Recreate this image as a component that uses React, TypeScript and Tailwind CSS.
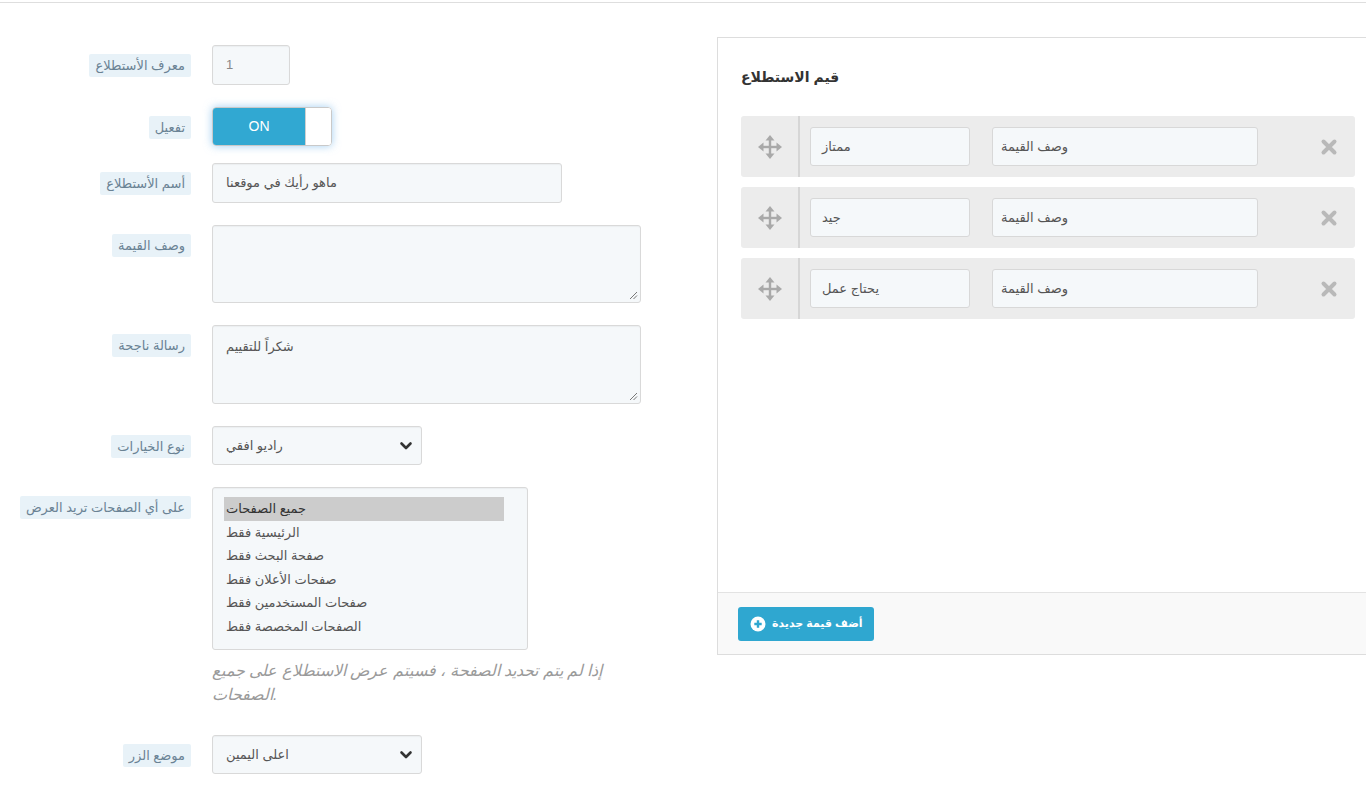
import React from "react";

const font = { fontFamily: '"Liberation Sans", "DejaVu Sans", sans-serif' };

function Label({ children }: { children: React.ReactNode }) {
  return (
    <div className="w-[191px] flex justify-end items-start pt-[9px] shrink-0">
      <span className="bg-[#e8f2f8] text-[#6a8294] text-[13px] leading-[23px] px-[6px] rounded-[2px] whitespace-nowrap">
        {children}
      </span>
    </div>
  );
}

function Chevron() {
  return (
    <svg width="14" height="14" viewBox="0 0 14 14" className="shrink-0">
      <path d="M2.5 4.5 L7 9 L11.5 4.5" fill="none" stroke="#333" strokeWidth="2.6" strokeLinecap="round" strokeLinejoin="round" />
    </svg>
  );
}

function MoveIcon() {
  return (
    <svg width="26" height="26" viewBox="0 0 26 26">
      <g fill="#a9a9a9">
        <rect x="11.8" y="5" width="2.4" height="16" />
        <rect x="5" y="11.8" width="16" height="2.4" />
        <path d="M13 1 L17.5 6.5 L8.5 6.5 Z" />
        <path d="M13 25 L17.5 19.5 L8.5 19.5 Z" />
        <path d="M1 13 L6.5 8.5 L6.5 17.5 Z" />
        <path d="M25 13 L19.5 8.5 L19.5 17.5 Z" />
      </g>
    </svg>
  );
}

function XIcon() {
  return (
    <svg width="18" height="18" viewBox="0 0 18 18">
      <path d="M3.5 3.5 L14.5 14.5 M14.5 3.5 L3.5 14.5" stroke="#b9b9b9" strokeWidth="4" strokeLinecap="round" />
    </svg>
  );
}

function ValueRow({ name }: { name: string }) {
  return (
    <div className="flex items-center h-[61px] bg-[#ececec] rounded-[3px]">
      <div className="w-[59px] h-full flex items-center justify-center border-r-2 border-[#d6d6d6]">
        <MoveIcon />
      </div>
      <div className="ml-[10px] w-[160px] h-[39px] bg-[#f5f8fa] border border-[#d8d8d8] rounded-[3px] flex items-center px-[11px] text-[13px] text-[#555]">
        {name}
      </div>
      <div className="ml-[22px] w-[266px] h-[39px] bg-[#f5f8fa] border border-[#d8d8d8] rounded-[3px] flex items-center px-[8px] text-[13px] text-[#555]">
        وصف القيمة
      </div>
      <div className="flex-1 flex justify-end pr-[17px]">
        <XIcon />
      </div>
    </div>
  );
}

function Grip() {
  return (
    <svg width="9" height="9" viewBox="0 0 9 9" className="absolute right-[2px] bottom-[2px]">
      <path d="M8 1 L1 8 M8 4.5 L4.5 8" stroke="#777" strokeWidth="1" />
    </svg>
  );
}

export default function App() {
  const pages = [
    "جميع الصفحات",
    "الرئيسية فقط",
    "صفحة البحث فقط",
    "صفحات الأعلان فقط",
    "صفحات المستخدمين فقط",
    "الصفحات المخصصة فقط",
  ];
  const inputCls =
    "bg-[#f5f8fa] border border-[#d9d9d9] rounded-[3px] text-[13px] text-[#555] shadow-[inset_0_1px_1px_rgba(0,0,0,0.04)]";
  return (
    <div className="w-[1366px] h-[793px] overflow-hidden bg-white" style={font}>
      <div className="h-[3px] border-b border-[#dedede]" />
      <div className="flex">
        {/* left form */}
        <div className="w-[717px] shrink-0 pt-[42px]">
          <div className="flex gap-[21px] mb-[22px]">
            <Label>معرف الأستطلاع</Label>
            <div className={`${inputCls} w-[78px] h-[40px] flex items-center px-[13px] text-[#888]`}>1</div>
          </div>
          <div className="flex gap-[21px] mb-[17px]">
            <Label>تفعيل</Label>
            <div className="w-[120px] h-[39px] flex rounded-[4px] border border-[#c9c9c9] overflow-hidden shadow-[0_0_8px_rgba(102,175,233,0.6)]">
              <div className="w-[92px] bg-[#31a8d2] text-white text-[14px] flex items-center justify-center">ON</div>
              <div className="flex-1 bg-white border-l border-[#d0d0d0]" />
            </div>
          </div>
          <div className="flex gap-[21px] mb-[22px]">
            <Label>أسم الأستطلاع</Label>
            <div className={`${inputCls} w-[350px] h-[40px] flex items-center px-[13px]`}>ماهو رأيك في موقعنا</div>
          </div>
          <div className="flex gap-[21px] mb-[22px]">
            <Label>وصف القيمة</Label>
            <div className={`${inputCls} w-[429px] h-[78px] relative`}>
              <Grip />
            </div>
          </div>
          <div className="flex gap-[21px] mb-[22px]">
            <Label>رسالة ناجحة</Label>
            <div className={`${inputCls} w-[429px] h-[79px] relative px-[13px] pt-[11px]`}>
              شكراً للتقييم
              <Grip />
            </div>
          </div>
          <div className="flex gap-[21px] mb-[22px]">
            <Label>نوع الخيارات</Label>
            <div className={`${inputCls} w-[210px] h-[39px] flex items-center justify-between pl-[13px] pr-[8px]`}>
              <span>راديو افقي</span>
              <Chevron />
            </div>
          </div>
          <div className="flex gap-[21px]">
            <Label>على أي الصفحات تريد العرض</Label>
            <div>
              <div className={`${inputCls} w-[316px] h-[163px] pl-[11px] pt-[9px]`}>
                {pages.map((p, i) => (
                  <div
                    key={p}
                    className={`w-[280px] h-[23.5px] leading-[23.5px] px-[2px] ${i === 0 ? "bg-[#cccccc] text-[#333]" : "text-[#555]"}`}
                  >
                    {p}
                  </div>
                ))}
              </div>
              <p className="w-[440px] mt-[9px] text-[16px] leading-[24px] italic text-[#9a9a9a]">
                إذا لم يتم تحديد الصفحة ، فسيتم عرض الاستطلاع على جميع
                <br />
                الصفحات.
              </p>
            </div>
          </div>
          <div className="flex gap-[21px] mt-[28px]">
            <Label>موضع الزر</Label>
            <div className={`${inputCls} w-[210px] h-[39px] flex items-center justify-between pl-[13px] pr-[8px]`}>
              <span>اعلى اليمين</span>
              <Chevron />
            </div>
          </div>
        </div>

        {/* right panel */}
        <div className="mt-[34px] w-[670px] shrink-0 h-[618px] border border-[#dddddd] bg-white flex flex-col">
          <div className="flex-1 px-[23px]">
            <h3 className="mt-[27px] mb-[27px] text-[14px] font-bold text-[#333] leading-[24px]">قيم الاستطلاع</h3>
            <div className="w-[614px] flex flex-col gap-[10px]">
              <ValueRow name="ممتاز" />
              <ValueRow name="جيد" />
              <ValueRow name="يحتاج عمل" />
            </div>
          </div>
          <div className="h-[62px] bg-[#f9f9f9] border-t border-[#e3e3e3] flex items-center px-[20px]">
            <button className="h-[34px] w-[136px] bg-[#2fa7d0] rounded-[3px] flex items-center gap-[6px] pl-[12px] text-white text-[11px] font-bold whitespace-nowrap">
              <svg width="16" height="16" viewBox="0 0 16 16" className="shrink-0">
                <circle cx="8" cy="8" r="7.5" fill="#fff" />
                <path d="M8 4.3 V11.7 M4.3 8 H11.7" stroke="#2fa7d0" strokeWidth="2.4" />
              </svg>
              <span>أضف قيمة جديدة</span>
            </button>
          </div>
        </div>
      </div>
    </div>
  );
}
